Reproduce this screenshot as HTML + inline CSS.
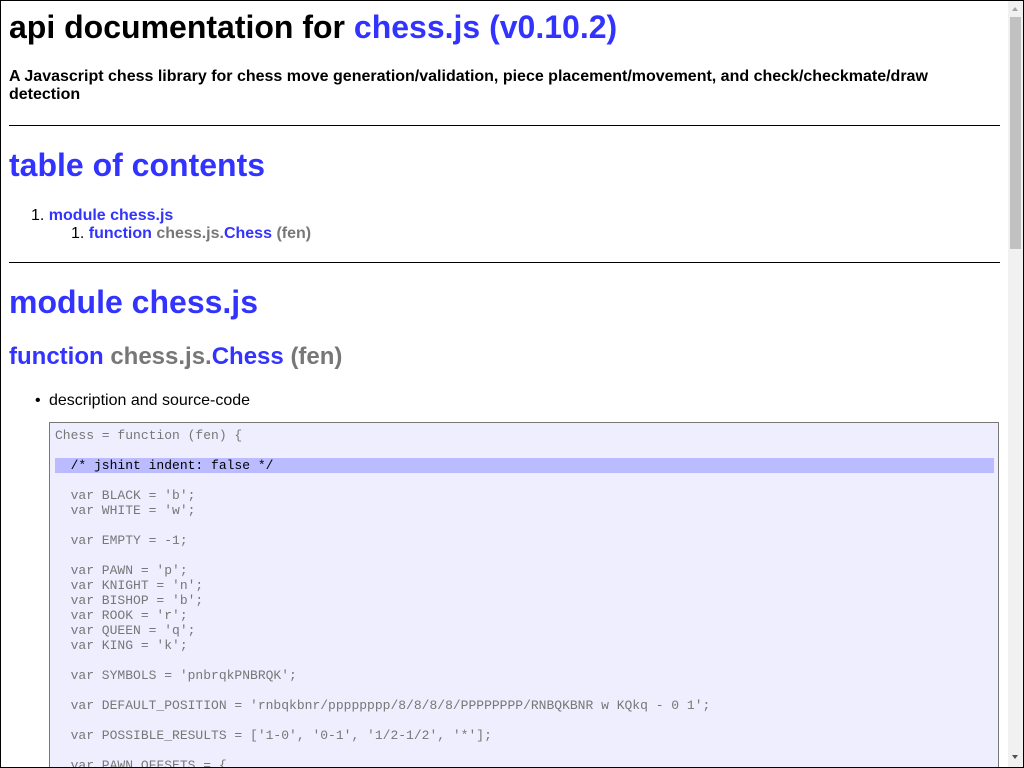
<!DOCTYPE html>
<html><head><meta charset="utf-8"><style>
html,body{margin:0;padding:0;overflow:hidden;}
body{width:1024px;height:768px;position:relative;font-family:"Liberation Sans",Arial,sans-serif;color:#000;background:#fff;}
.frame{position:absolute;left:0;top:0;width:1022px;height:766px;border:1px solid #000;z-index:5;pointer-events:none;}
.sb{position:absolute;left:1008px;top:1px;width:15px;height:766px;background:#f1f1f1;}
.thumb{position:absolute;left:2px;top:16px;width:11px;height:232px;background:#c1c1c1;}
.a{position:absolute;white-space:nowrap;}
.b{color:#3333ff;}
.g{color:#777;}
.hr{position:absolute;left:9px;width:991px;height:0;border-top:1px solid #000;}
pre{position:absolute;left:49px;top:422px;width:938px;height:340px;overflow:hidden;margin:0;border:1px solid #777;background:#eeeeff;padding:5px;font-family:"Liberation Mono",monospace;font-size:13px;line-height:15px;color:#777;}
.hl{background:#bbbbff;color:#000;display:block;margin-right:-1px;}
</style></head><body>
<div class="frame"></div>
<div class="a" style="left:9px;top:7px;font-size:32px;font-weight:bold;line-height:40px;">api documentation for <span class="b">chess.js (v0.10.2)</span></div>
<div class="a" style="left:9px;top:68px;font-size:16px;font-weight:bold;line-height:18px;white-space:normal;width:990px;">A Javascript chess library for chess move generation/validation, piece placement/movement, and check/checkmate/draw detection</div>
<div class="hr" style="top:125px"></div>
<div class="a b" style="left:9px;top:145px;font-size:32px;font-weight:bold;line-height:40px;">table of contents</div>
<div class="a" style="left:31px;top:207px;font-size:16px;line-height:18px;">1. <b class="b">module chess.js</b></div>
<div class="a" style="left:71px;top:225px;font-size:16px;line-height:18px;">1. <b><span class="b">function</span> <span class="g">chess.js.</span><span class="b">Chess</span> <span class="g">(fen)</span></b></div>
<div class="hr" style="top:262px"></div>
<div class="a b" style="left:9px;top:282px;font-size:32px;font-weight:bold;line-height:40px;">module chess.js</div>
<div class="a" style="left:9px;top:342px;font-size:24px;font-weight:bold;line-height:30px;"><span class="b">function</span> <span class="g">chess.js.</span><span class="b">Chess</span> <span class="g">(fen)</span></div>
<div class="a" style="left:35px;top:392px;font-size:16px;line-height:18px;">&bull;</div>
<div class="a" style="left:49px;top:392px;font-size:16px;line-height:18px;">description and source-code</div>
<pre>Chess = function (fen) {

<span class="hl">  /* jshint indent: false */</span>
  var BLACK = 'b';
  var WHITE = 'w';

  var EMPTY = -1;

  var PAWN = 'p';
  var KNIGHT = 'n';
  var BISHOP = 'b';
  var ROOK = 'r';
  var QUEEN = 'q';
  var KING = 'k';

  var SYMBOLS = 'pnbrqkPNBRQK';

  var DEFAULT_POSITION = 'rnbqkbnr/pppppppp/8/8/8/8/PPPPPPPP/RNBQKBNR w KQkq - 0 1';

  var POSSIBLE_RESULTS = ['1-0', '0-1', '1/2-1/2', '*'];

  var PAWN_OFFSETS = {</pre>
<div class="sb"><div class="thumb"></div>
<div style="position:absolute;left:4px;top:6px;width:0;height:0;border-left:3.5px solid transparent;border-right:3.5px solid transparent;border-bottom:4px solid #a3a3a3;"></div>
<div style="position:absolute;left:4px;top:754px;width:0;height:0;border-left:3.5px solid transparent;border-right:3.5px solid transparent;border-top:4px solid #505050;"></div>
</div>
</body></html>
